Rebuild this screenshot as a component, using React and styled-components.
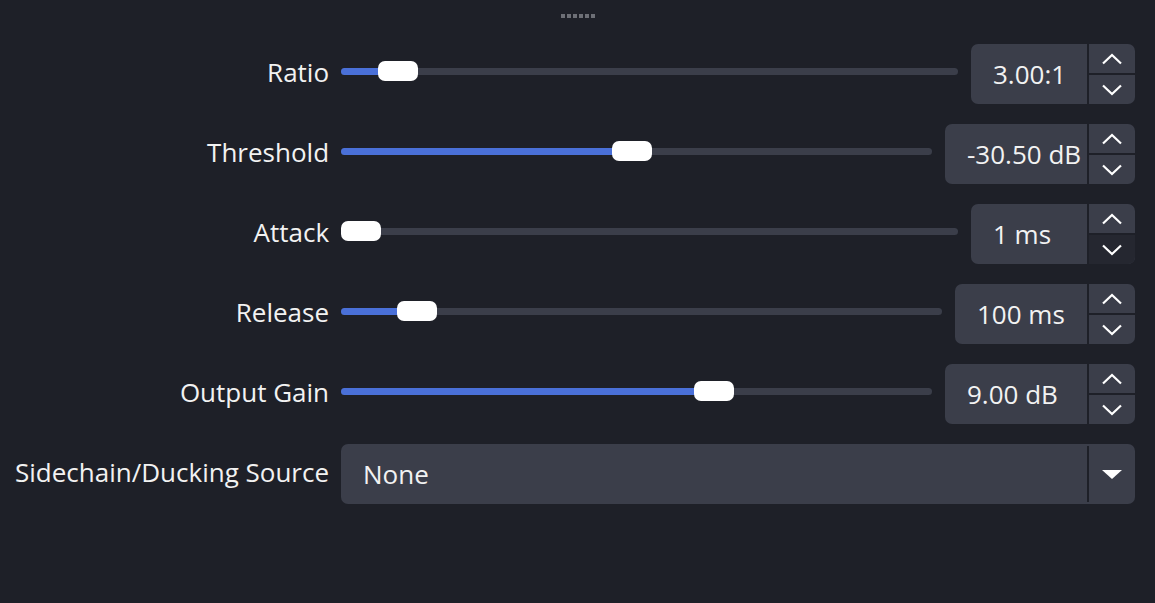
import React from 'react';
import styled, { createGlobalStyle } from 'styled-components';

const GlobalStyle = createGlobalStyle`
  html, body {
    margin: 0;
    padding: 0;
    background: #1e2028;
  }
  body {
    font-family: 'Open Sans', 'Noto Sans', sans-serif;
    color: #f2f2f2;
  }
`;

const rows = [
  { label: 'Ratio', text: '3.00:1', value: 3, min: 1, max: 32, width: 164 },
  { label: 'Threshold', text: '-30.50 dB', value: -30.5, min: -60, max: 0, width: 190 },
  { label: 'Attack', text: '1 ms', value: 1, min: 1, max: 500, width: 164, pressed: true },
  { label: 'Release', text: '100 ms', value: 100, min: 1, max: 1000, width: 180 },
  { label: 'Output Gain', text: '9.00 dB', value: 9, min: -32, max: 32, width: 190 },
];

const Chevron = ({ up }) => (
  <svg width="22" height="12" viewBox="0 0 22 12">
    <path
      d={up ? 'M2 10.5 L11 2 L20 10.5' : 'M2 1.5 L11 10 L20 1.5'}
      fill="none"
      stroke="#ffffff"
      strokeWidth="2.2"
    />
  </svg>
);

const App = () => {
  return (
    <Page>
      <GlobalStyle />
      <Grip>
        {[0, 1, 2, 3, 4, 5].map((i) => (
          <GripDot key={i} />
        ))}
      </Grip>
      <Form>
        {rows.map((r) => {
          const frac = (r.value - r.min) / (r.max - r.min);
          return (
            <React.Fragment key={r.label}>
              <Label>{r.label}</Label>
              <Control>
                <Slider>
                  <Track>
                    <Fill style={{ width: `calc(${frac} * (100% - 40px) + 20px)` }} />
                    <Handle style={{ left: `calc(${frac} * (100% - 40px))` }} />
                  </Track>
                </Slider>
                <SpinBox $width={r.width}>
                  <SpinText>{r.text}</SpinText>
                  <SpinButtons>
                    <SpinButton>
                      <Chevron up />
                    </SpinButton>
                    <SpinButton $pressed={r.pressed} $bottom>
                      <Chevron />
                    </SpinButton>
                  </SpinButtons>
                </SpinBox>
              </Control>
            </React.Fragment>
          );
        })}
        <Label>Sidechain/Ducking Source</Label>
        <Select>
          <SelectText>None</SelectText>
          <SelectArrow>
            <svg width="20" height="9" viewBox="0 0 20 9">
              <path d="M0 0 L20 0 L10 9 Z" fill="#ffffff" />
            </svg>
          </SelectArrow>
        </Select>
      </Form>
    </Page>
  );
};

const Page = styled.div`
  width: 1155px;
  height: 603px;
  box-sizing: border-box;
  padding: 14px 20px 0 15px;
`;

const Grip = styled.div`
  display: flex;
  justify-content: center;
  gap: 2px;
  height: 4px;
  margin-bottom: 26px;
  padding-left: 5px;
`;

const GripDot = styled.span`
  width: 4px;
  height: 4px;
  background: #6d6f76;
`;

const Form = styled.div`
  display: grid;
  grid-template-columns: auto 1fr;
  column-gap: 12px;
  row-gap: 20px;
  align-items: center;
`;

const Label = styled.div`
  font-size: 26px;
  text-align: right;
  white-space: nowrap;
  line-height: 56px;
  padding-bottom: 4px;
`;

const Control = styled.div`
  display: flex;
  align-items: center;
  gap: 13px;
  height: 60px;
`;

const Slider = styled.div`
  flex: 1;
  padding-bottom: 5px;
`;

const Track = styled.div`
  position: relative;
  height: 7px;
  border-radius: 4px;
  background: #3b3e4a;
`;

const Fill = styled.div`
  height: 100%;
  border-radius: 4px;
  background: #4a70d8;
`;

const Handle = styled.div`
  position: absolute;
  top: -7px;
  width: 40px;
  height: 20px;
  border-radius: 7px;
  background: #ffffff;
`;

const SpinBox = styled.div`
  width: ${(p) => p.$width}px;
  height: 60px;
  display: flex;
  border-radius: 7px;
  background: #3b3e4a;
  overflow: hidden;
`;

const SpinText = styled.div`
  flex: 1;
  display: flex;
  align-items: center;
  padding-left: 22px;
  font-size: 26px;
  white-space: nowrap;
`;

const SpinButtons = styled.div`
  width: 46px;
  display: flex;
  flex-direction: column;
  border-left: 2px solid #1e2028;
`;

const SpinButton = styled.div`
  flex: 1;
  display: flex;
  align-items: center;
  justify-content: center;
  background: ${(p) => (p.$pressed ? '#252730' : 'transparent')};
  border-top: ${(p) => (p.$bottom ? '2px solid #1e2028' : 'none')};
`;

const Select = styled.div`
  height: 60px;
  display: flex;
  border-radius: 7px;
  background: #3b3e4a;
  overflow: hidden;
`;

const SelectText = styled.div`
  flex: 1;
  display: flex;
  align-items: center;
  padding-left: 22px;
  font-size: 26px;
`;

const SelectArrow = styled.div`
  width: 46px;
  display: flex;
  align-items: center;
  justify-content: center;
  border-left: 2px solid #1e2028;
  margin: 2px 0;
`;

export default App;
